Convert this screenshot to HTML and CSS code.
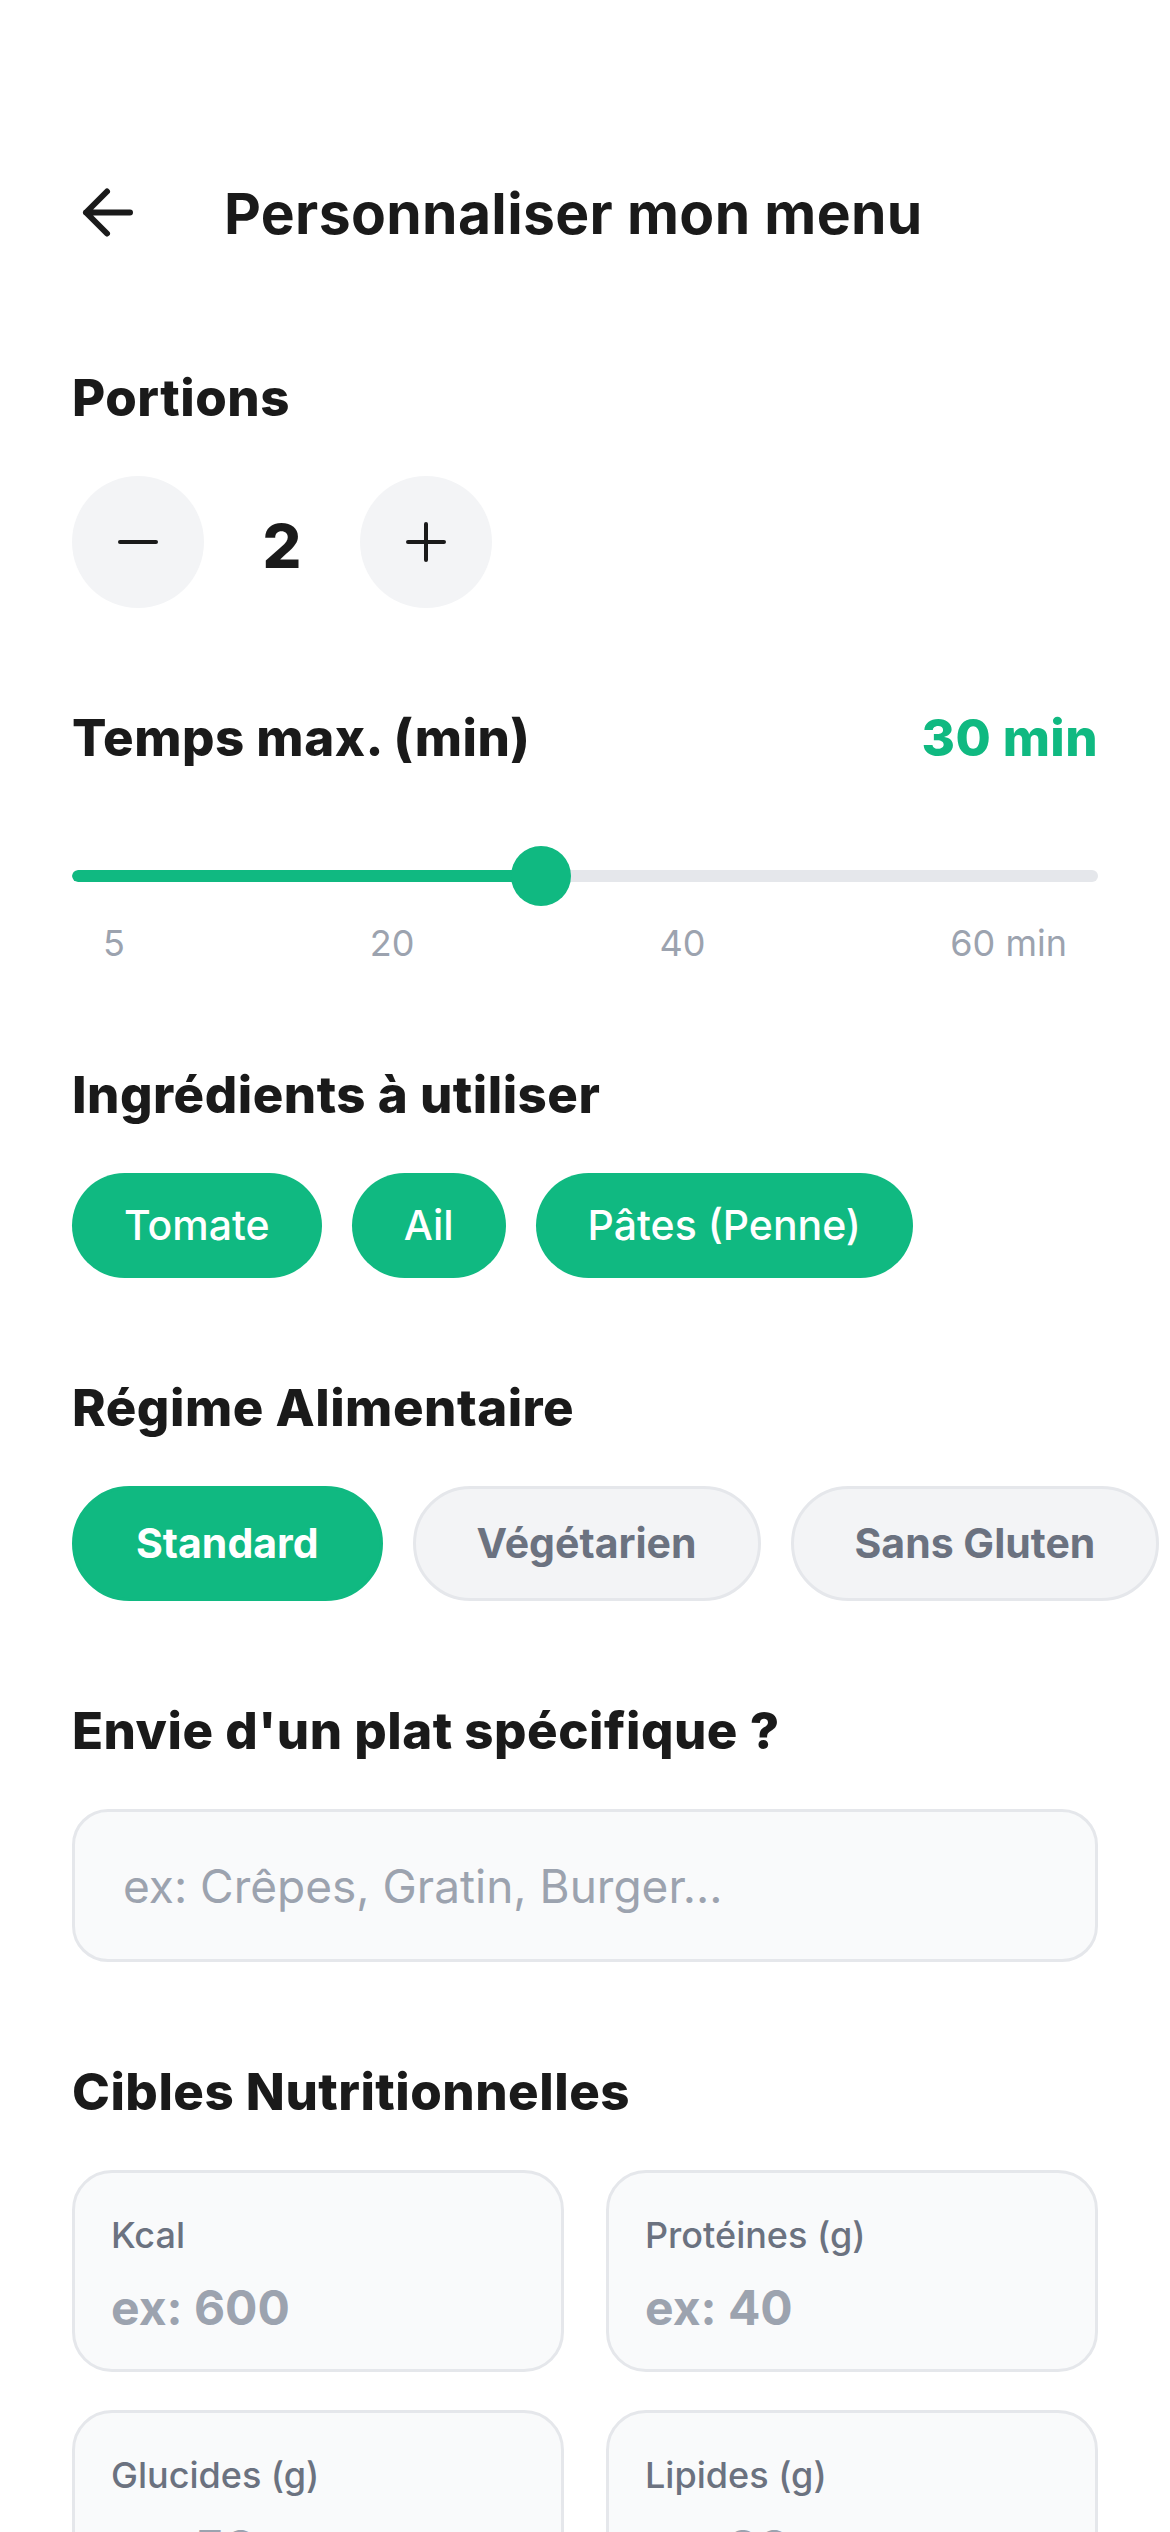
FILE: index.html
```html
<!DOCTYPE html>
<html lang="fr">
<head>
<meta charset="utf-8">
<title>Personnaliser mon menu</title>
<link rel="stylesheet" href="styles.css">
</head>
<body>
<div class="page">
  <header class="topbar">
    <button class="back" aria-label="Retour">
      <svg width="72" height="72" viewBox="0 0 72 72" fill="none" stroke="#1a1a1a" stroke-width="6" stroke-linecap="round" stroke-linejoin="round"><path d="M58 34.5H14M35 13.5L14 34.5L35 55.5"/></svg>
    </button>
    <h1 class="title">Personnaliser mon menu</h1>
  </header>

  <section class="section">
    <h2 class="section-title">Portions</h2>
    <div class="stepper">
      <button class="step-btn" aria-label="Moins">
        <svg width="40" height="40" viewBox="0 0 40 40" fill="none" stroke="#1a1a1a" stroke-width="4" stroke-linecap="round"><path d="M2 20H38"/></svg>
      </button>
      <span class="step-value">2</span>
      <button class="step-btn" aria-label="Plus">
        <svg width="40" height="40" viewBox="0 0 40 40" fill="none" stroke="#1a1a1a" stroke-width="4" stroke-linecap="round"><path d="M2 20H38M20 2V38"/></svg>
      </button>
    </div>
  </section>

  <section class="section">
    <div class="section-head">
      <h2 class="section-title flat">Temps max. (min)</h2>
      <span class="time-value">30 min</span>
    </div>
    <div class="slider">
      <div class="track"><div class="fill" style="width: calc((100% - 60px) * 0.4545 + 30px)"></div></div>
      <div class="thumb" style="left: calc((100% - 60px) * 0.4545)"></div>
    </div>
    <div class="ticks"><span>5</span><span>20</span><span>40</span><span>60 min</span></div>
  </section>

  <section class="section">
    <h2 class="section-title">Ingrédients à utiliser</h2>
    <div class="chips">
      <span class="chip">Tomate</span>
      <span class="chip">Ail</span>
      <span class="chip">Pâtes (Penne)</span>
    </div>
  </section>

  <section class="section">
    <h2 class="section-title">Régime Alimentaire</h2>
    <div class="diet-row">
      <button class="diet active">Standard</button>
      <button class="diet">Végétarien</button>
      <button class="diet">Sans Gluten</button>
    </div>
  </section>

  <section class="section">
    <h2 class="section-title">Envie d'un plat spécifique ?</h2>
    <input class="text-input" type="text" placeholder="ex: Crêpes, Gratin, Burger...">
  </section>

  <section class="section">
    <h2 class="section-title">Cibles Nutritionnelles</h2>
    <div class="macro-grid">
      <label class="macro"><span class="macro-label">Kcal</span><input class="macro-input" type="text" placeholder="ex: 600"></label>
      <label class="macro"><span class="macro-label">Protéines (g)</span><input class="macro-input" type="text" placeholder="ex: 40"></label>
      <label class="macro"><span class="macro-label">Glucides (g)</span><input class="macro-input" type="text" placeholder="ex: 50"></label>
      <label class="macro"><span class="macro-label">Lipides (g)</span><input class="macro-input" type="text" placeholder="ex: 20"></label>
    </div>
  </section>
</div>
</body>
</html>
```

FILE: styles.css
```css
* { box-sizing: border-box; }

html, body {
  margin: 0;
  background: #ffffff;
}

body {
  font-family: Inter, "Noto Sans", "Liberation Sans", sans-serif;
  color: #1a1a1a;
}

button {
  font-family: inherit;
  border: none;
  background: none;
  padding: 0;
  margin: 0;
  cursor: pointer;
}

.page {
  padding: 178px 72px 0;
}

.topbar {
  display: flex;
  align-items: center;
  height: 72px;
  margin-bottom: 118px;
}

.back {
  width: 72px;
  height: 72px;
  display: flex;
  align-items: center;
  justify-content: center;
  flex-shrink: 0;
}

.back svg { display: block; }

.title {
  margin: 0 0 0 80px;
  font-size: 57px;
  line-height: 68px;
  font-weight: 700;
  color: #1a1a1a;
  letter-spacing: 0.35px;
}

.section {
  margin-bottom: 100px;
}

.section-title {
  margin: 0 0 48px;
  font-size: 51px;
  line-height: 60px;
  font-weight: 800;
  color: #1a1a1a;
  letter-spacing: 0.5px;
}

.section-title.flat { margin: 0; }

/* Stepper */
.stepper {
  display: flex;
  align-items: center;
  gap: 48px;
}

.step-btn {
  width: 132px;
  height: 132px;
  border-radius: 50%;
  background: #F3F4F6;
  display: flex;
  align-items: center;
  justify-content: center;
}

.step-btn svg { display: block; }

.step-value {
  width: 60px;
  padding-top: 8px;
  text-align: center;
  font-size: 61px;
  font-weight: 800;
  line-height: 72px;
}

/* Slider */
.section-head {
  display: flex;
  justify-content: space-between;
  align-items: baseline;
  margin-bottom: 78px;
}

.time-value {
  font-size: 51px;
  line-height: 60px;
  font-weight: 800;
  color: #10B981;
  letter-spacing: 0.4px;
}

.slider {
  position: relative;
  height: 60px;
  display: flex;
  align-items: center;
}

.track {
  width: 100%;
  height: 12px;
  border-radius: 6px;
  background: #E5E7EB;
  overflow: hidden;
}

.fill {
  height: 100%;
  background: #10B981;
  border-radius: 6px;
}

.thumb {
  position: absolute;
  top: 0;
  width: 60px;
  height: 60px;
  border-radius: 50%;
  background: #10B981;
}

.ticks {
  display: flex;
  justify-content: space-between;
  margin-top: 15px;
  padding: 0 31px;
  font-size: 36px;
  line-height: 44px;
  color: #9CA3AF;
}

/* Ingredient chips */
.chips {
  display: flex;
  flex-wrap: wrap;
  gap: 30px;
}

.chip {
  padding: 27px 52px;
  line-height: 51px;
  font-size: 41px;
  font-weight: 500;
  color: #ffffff;
  background: #10B981;
  border-radius: 999px;
}

/* Diet chips */
.diet-row {
  display: flex;
  gap: 30px;
  overflow-x: auto;
  margin-right: -72px;
  padding-right: 12px;
  scrollbar-width: none;
}

.diet-row::-webkit-scrollbar { display: none; }

.diet {
  flex-shrink: 0;
  padding: 29px 61px;
  line-height: 51px;
  font-size: 41px;
  font-weight: 700;
  color: #6B7280;
  background: #F3F4F6;
  border: 3px solid #E5E7EB;
  border-radius: 999px;
}

.diet.active {
  color: #ffffff;
  background: #10B981;
  border-color: #10B981;
}

/* Text input */
.text-input {
  display: block;
  width: 100%;
  height: 153px;
  padding: 0 48px;
  border: 3px solid #E5E7EB;
  border-radius: 36px;
  background: #F9FAFB;
  font-family: inherit;
  font-size: 46px;
  color: #1a1a1a;
  outline: none;
}

.text-input::placeholder { color: #9CA3AF; }

/* Macro grid */
.macro-grid {
  display: grid;
  grid-template-columns: 1fr 1fr;
  gap: 38px 42px;
}

.macro {
  display: flex;
  flex-direction: column;
  padding: 40px 36px 32px;
  border: 3px solid #E5E7EB;
  border-radius: 40px;
  background: #F9FAFB;
}

.macro-label {
  font-size: 36px;
  line-height: 44px;
  font-weight: 500;
  color: #6B7280;
}

.macro-input {
  margin-top: 22px;
  width: 100%;
  height: 58px;
  padding: 0;
  border: none;
  background: transparent;
  font-family: inherit;
  font-size: 48px;
  line-height: 58px;
  font-weight: 700;
  color: #1a1a1a;
  outline: none;
}

.macro-input::placeholder { color: #9CA3AF; }
```
